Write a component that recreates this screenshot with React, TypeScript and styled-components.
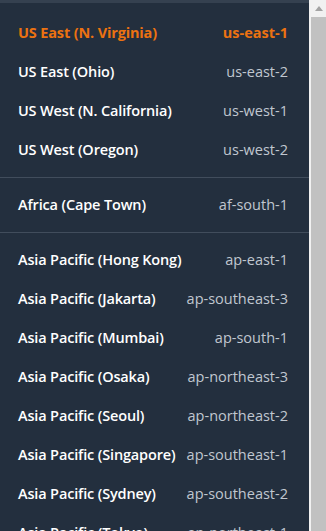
import React from "react";
import styled, { createGlobalStyle } from "styled-components";

const Global = createGlobalStyle`
  html, body { margin: 0; padding: 0; background: #f1f1f1; overflow: hidden; }
  body { font-family: "Open Sans", "Noto Sans", sans-serif; }
`;

const Page = styled.div`
  display: flex;
  width: 326px;
  height: 531px;
  overflow: hidden;
`;

const Menu = styled.div`
  width: 309px;
  flex: none;
  background: #232f3e;
  border-top: 3px solid #354150;
  padding-top: 10px;
  box-sizing: border-box;
  overflow: hidden;
`;

const Group = styled.div`
  display: flex;
  flex-direction: column;
`;

const Divider = styled.div`
  height: 1px;
  background: #414d5c;
  margin: 8px 0 7px;
`;

const Row = styled.div<{ $active?: boolean }>`
  display: flex;
  align-items: center;
  justify-content: space-between;
  height: 39px;
  padding: 0 21px 0 18px;
  font-size: 14.5px;
  color: ${(p) => (p.$active ? "#ec7211" : "#ffffff")};
`;

const Name = styled.span<{ $active?: boolean }>`
  font-weight: ${(p) => (p.$active ? 700 : 600)};
  letter-spacing: -0.15px;
  white-space: nowrap;
`;

const Code = styled.span<{ $active?: boolean }>`
  font-weight: ${(p) => (p.$active ? 700 : 400)};
  color: ${(p) => (p.$active ? "#ec7211" : "#c0c7d0")};
  white-space: nowrap;
`;

const Scrollbar = styled.div`
  width: 17px;
  flex: none;
  display: flex;
  flex-direction: column;
  background: #f1f1f1;
  padding-left: 2px;
  box-sizing: border-box;
`;

const ArrowBox = styled.div`
  height: 17px;
  display: flex;
  align-items: center;
  justify-content: center;
`;

const Thumb = styled.div`
  flex: 1;
  background: #c1c1c1;
`;

type Region = { name: string; code: string; active?: boolean };

const groups: Region[][] = [
  [
    { name: "US East (N. Virginia)", code: "us-east-1", active: true },
    { name: "US East (Ohio)", code: "us-east-2" },
    { name: "US West (N. California)", code: "us-west-1" },
    { name: "US West (Oregon)", code: "us-west-2" },
  ],
  [{ name: "Africa (Cape Town)", code: "af-south-1" }],
  [
    { name: "Asia Pacific (Hong Kong)", code: "ap-east-1" },
    { name: "Asia Pacific (Jakarta)", code: "ap-southeast-3" },
    { name: "Asia Pacific (Mumbai)", code: "ap-south-1" },
    { name: "Asia Pacific (Osaka)", code: "ap-northeast-3" },
    { name: "Asia Pacific (Seoul)", code: "ap-northeast-2" },
    { name: "Asia Pacific (Singapore)", code: "ap-southeast-1" },
    { name: "Asia Pacific (Sydney)", code: "ap-southeast-2" },
    { name: "Asia Pacific (Tokyo)", code: "ap-northeast-1" },
  ],
];

export default function App() {
  return (
    <Page>
      <Global />
      <Menu>
        {groups.map((g, i) => (
          <React.Fragment key={i}>
            {i > 0 && <Divider />}
            <Group>
              {g.map((r) => (
                <Row key={r.code} $active={r.active}>
                  <Name $active={r.active}>{r.name}</Name>
                  <Code $active={r.active}>{r.code}</Code>
                </Row>
              ))}
            </Group>
          </React.Fragment>
        ))}
      </Menu>
      <Scrollbar>
        <ArrowBox>
          <svg width="8" height="5" viewBox="0 0 8 5">
            <path d="M0 5 L4 0 L8 5 Z" fill="#a3a3a3" />
          </svg>
        </ArrowBox>
        <Thumb />
      </Scrollbar>
    </Page>
  );
}
